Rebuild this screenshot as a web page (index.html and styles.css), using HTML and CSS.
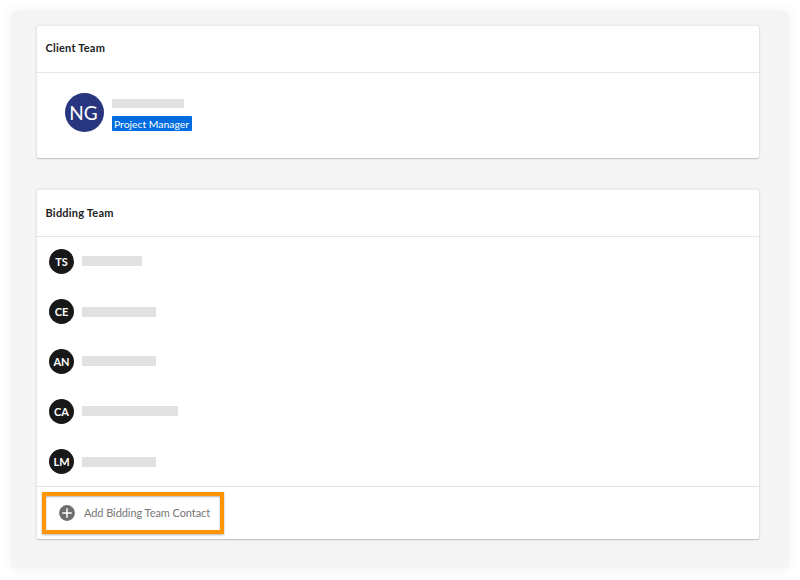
FILE: index.html
```html
<!DOCTYPE html>
<html lang="en">
<head>
<meta charset="utf-8">
<title>Project Team</title>
<link rel="stylesheet" href="styles.css">
</head>
<body>
<main class="panel">
  <section class="card client">
    <h2 class="card-title">Client Team</h2>
    <div class="client-body">
      <span class="avatar avatar-lg">NG</span>
      <div class="client-info">
        <span class="name name-client"></span>
        <span class="role">Project Manager</span>
      </div>
    </div>
  </section>
  <section class="card bidding">
    <h2 class="card-title">Bidding Team</h2>
    <ul class="members">
      <li class="member"><span class="avatar">TS</span><span class="name name-short"></span></li>
      <li class="member low"><span class="avatar">CE</span><span class="name"></span></li>
      <li class="member"><span class="avatar">AN</span><span class="name"></span></li>
      <li class="member"><span class="avatar">CA</span><span class="name name-long"></span></li>
      <li class="member low"><span class="avatar">LM</span><span class="name"></span></li>
    </ul>
    <div class="card-footer">
      <button class="add" type="button">
        <svg class="add-icon" viewBox="0 0 16 16" aria-hidden="true"><circle cx="8" cy="8" r="7.9" fill="#6e6e6e"/><path d="M8 3.2v9.6M3.2 8h9.6" stroke="#fff" stroke-width="1.5"/></svg>
        <span>Add Bidding Team Contact</span>
      </button>
    </div>
  </section>
</main>
</body>
</html>
```
FILE: styles.css
```css
* { box-sizing: border-box; }

body {
  margin: 0;
  padding: 12px;
  height: 580px;
  background: #fff;
  font-family: Lato, "Liberation Sans", sans-serif;
  color: #222;
  overflow: hidden;
}

.panel {
  width: 776px;
  height: 556px;
  padding: 13px 28px 0 24px;
  display: flex;
  flex-direction: column;
  gap: 32px;
  background: #f4f4f4;
  border: 1px solid #f0f0f0;
  box-shadow: inset 0 0 0 1px #f8f8f8, 0 0 14px rgba(0, 0, 0, .07);
}

.card {
  display: flex;
  flex-direction: column;
  background: #fff;
  border-radius: 2px;
  box-shadow: 0 1px 1px #c3c4c7, 0 0 2px 1px #e4e4e4;
}

.client { height: 132px; }
.bidding { height: 349px; }

.card-title {
  flex: none;
  height: 47px;
  margin: 0;
  padding: 0 8.5px;
  border-bottom: 1.5px solid #e6e6e6;
  font-size: 11px;
  font-weight: 700;
  line-height: 44px;
  letter-spacing: .22px;
}

.bidding .card-title { line-height: 46px; }

.client-body {
  display: flex;
  gap: 8px;
  padding: 20px 28px 0;
}

.client-info {
  display: flex;
  flex-direction: column;
  align-items: flex-start;
  gap: 8px;
  padding-top: 6px;
}

.avatar {
  flex: none;
  width: 25px;
  height: 25px;
  border-radius: 50%;
  background: #181818;
  color: #fff;
  font-size: 11px;
  font-weight: 700;
  line-height: 25px;
  text-align: center;
}

.avatar-lg {
  width: 39px;
  height: 39px;
  padding-right: 2px;
  background: #28367f;
  font-size: 19px;
  font-weight: 400;
  line-height: 39px;
}

.name {
  width: 74px;
  height: 10px;
  background: #e1e1e1;
}

.name-client { width: 72px; height: 9px; }
.name-short { width: 60px; }
.name-long { width: 96px; margin-left: -.5px; }

.role {
  width: 80px;
  height: 15px;
  margin-left: -.5px;
  border-radius: 1px;
  background: #006ce0;
  color: #fff;
  font-size: 10.4px;
  line-height: 17px;
  text-align: center;
  white-space: nowrap;
}

.members {
  margin: -1px 0 1px;
  padding: 0;
  list-style: none;
}

.member {
  display: flex;
  align-items: center;
  gap: 8px;
  height: 50px;
  padding-left: 12px;
}

.low .name { margin-top: 2px; }

.card-footer {
  height: 53px;
  margin-top: -1px;
  padding: 5px;
  border-top: 1px solid #e4e4e4;
}

.add {
  display: flex;
  align-items: center;
  gap: 9px;
  width: 182px;
  height: 42px;
  padding: 0 0 0 13px;
  border: 4px solid #ff9409;
  background: #fff;
  box-shadow: 0 1px 2px rgba(0, 0, 0, .3), inset 0 1px 2px rgba(0, 0, 0, .3);
  color: #777;
  font-family: inherit;
  font-size: 11px;
  letter-spacing: -.07px;
  white-space: nowrap;
}

.add span { margin-top: -1px; }

.add-icon { flex: none; width: 16px; height: 16px; }
```
